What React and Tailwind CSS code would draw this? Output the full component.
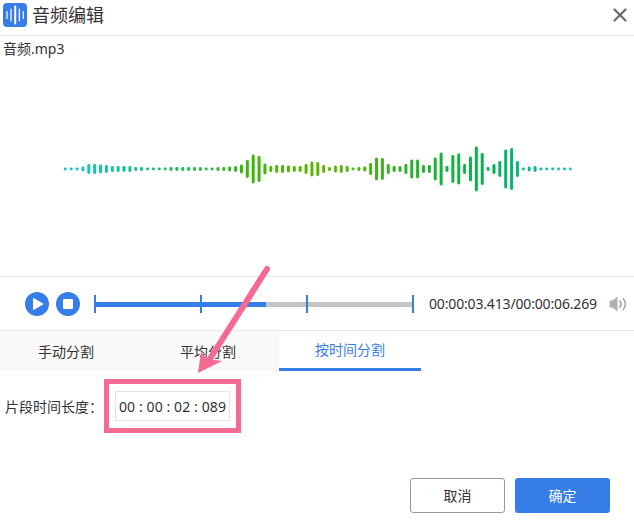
import React from "react";
import { X } from "lucide-react";

const FONT = "font-['Noto_Sans','Noto_Sans_CJK_SC',sans-serif]";

// bar heights of the waveform, left to right
const BARS = [
  3, 3, 3, 5, 10, 10, 9, 8, 6, 6, 6, 6, 4, 4, 3, 3, 3, 3, 4, 4, 4, 4, 4, 4, 3, 3, 4, 4, 5, 6, 9,
  18, 29, 26, 11, 6, 8, 8, 7, 6, 6, 10, 15, 14, 8, 4, 7, 8, 6, 3, 4, 5, 12, 23, 22, 10, 6, 6, 10,
  19, 19, 8, 8, 23, 33, 6, 28, 31, 10, 25, 45, 32, 4, 10, 16, 39, 42, 16, 3, 5, 6, 3, 3, 3, 3, 3, 3,
];

const Waveform = () => {
  const pitch = 505 / (BARS.length - 1);
  return (
    <svg width="634" height="60" viewBox="0 0 634 60" className="block">
      <defs>
        <linearGradient id="wave" gradientUnits="userSpaceOnUse" x1="65" y1="0" x2="570" y2="0">
          <stop offset="0" stopColor="#1cc4cf" />
          <stop offset="0.12" stopColor="#0ec096" />
          <stop offset="0.36" stopColor="#36b80a" />
          <stop offset="0.52" stopColor="#66b504" />
          <stop offset="0.68" stopColor="#26b326" />
          <stop offset="0.85" stopColor="#03b158" />
          <stop offset="1" stopColor="#1cc4cf" />
        </linearGradient>
      </defs>
      {BARS.map((h, i) => (
        <rect
          key={i}
          x={63.8 + i * pitch}
          y={30 - h / 2}
          width="3"
          height={h}
          rx="1.4"
          fill="url(#wave)"
        />
      ))}
    </svg>
  );
};

const AppIcon = () => (
  <svg width="24" height="24" viewBox="0 0 24 24" className="shrink-0">
    <rect width="24" height="24" rx="4" fill="#377de8" />
    <g stroke="#fff" strokeWidth="1.2" strokeLinecap="round">
      <path d="M4 8.500v7" />
      <path d="M8 6v12" />
      <path d="M12.200 3.500v17" strokeWidth="2" />
      <path d="M16.300 6v12" />
      <path d="M20.300 8.500v7" />
    </g>
  </svg>
);

const PlayIcon = () => (
  <svg width="24" height="24" viewBox="0 0 24 24">
    <circle cx="12" cy="12" r="12" fill="#377de8" />
    <path d="M8.500 6.500 18 12l-9.500 5.500z" fill="#fff" stroke="#fff" strokeWidth="1" strokeLinejoin="round" />
  </svg>
);

const StopIcon = () => (
  <svg width="24" height="24" viewBox="0 0 24 24">
    <circle cx="12" cy="12" r="12" fill="#377de8" />
    <rect x="7" y="7" width="10" height="10" rx="1" fill="#fff" />
  </svg>
);

const SpeakerIcon = () => (
  <svg width="18" height="18" viewBox="0 0 18 18">
    <path d="M0.500 5.500h3l5-4v15l-5-4h-3z" fill="#b0b0b0" />
    <path d="M10.800 6a4.500 4.500 0 0 1 0 6" fill="none" stroke="#b0b0b0" strokeWidth="1.8" strokeLinecap="round" />
    <path d="M14.200 3.500a8 8 0 0 1 0 11" fill="none" stroke="#b0b0b0" strokeWidth="1.8" strokeLinecap="round" />
  </svg>
);

const Arrow = () => (
  <svg
    width="90"
    height="120"
    viewBox="0 0 90 120"
    className="absolute left-[190px] top-[262px] pointer-events-none"
  >
    <path d="M77 7 16 103" fill="none" stroke="#f56a93" strokeWidth="6" strokeLinecap="round" />
    <path d="M8 111 11 90 17 97 32 99z" fill="#f56a93" />
  </svg>
);

const App = () => {
  return (
    <div className={`${FONT} relative flex h-[530px] w-[634px] flex-col overflow-hidden bg-white text-[#333]`}>
      {/* Title bar */}
      <div className="flex h-[36px] shrink-0 items-center border-b border-[#e8e8e8] pb-[6px] pl-[3px] pr-[3px]">
        <AppIcon />
        <span className="ml-[5px] text-[18px] leading-none">音频编辑</span>
        <X size={22} strokeWidth={2.6} className="ml-auto text-[#6d6d7a]" />
      </div>

      {/* Wave area */}
      <div className="flex h-[240px] shrink-0 flex-col">
        <div className="pl-[3px] pt-[3px] text-[14px] leading-[19px]">音频.mp3</div>
        <div className="mt-[81px]">
          <Waveform />
        </div>
      </div>

      {/* Player controls */}
      <div className="flex h-[55px] shrink-0 items-center border-y border-[#e8e8e8] pl-[25px]">
        <PlayIcon />
        <div className="ml-[7px]">
          <StopIcon />
        </div>
        <div className="relative ml-[14px] flex h-[18px] w-[320px] justify-between">
          <div className="absolute left-0 right-0 top-[7px] h-[5px] bg-[#c4c4c4]" />
          <div className="absolute left-0 top-[7px] h-[5px] w-[172px] bg-[#377de8]" />
          {[0, 1, 2, 3].map((i) => (
            <div key={i} className="relative h-full w-[2px] bg-[#377de8]" />
          ))}
        </div>
        <span className="ml-[15px] text-[14px] leading-none tracking-[-0.16px]">00:00:03.413/00:00:06.269</span>
        <div className="ml-[12px]">
          <SpeakerIcon />
        </div>
      </div>

      {/* Tabs */}
      <div className="flex h-[40px] shrink-0 text-[14px]">
        <div className="flex w-[137px] items-center justify-center bg-[#f9f9f9] pr-[5px]">手动分割</div>
        <div className="flex w-[142px] items-center justify-center bg-[#f9f9f9]">平均分割</div>
        <div className="flex w-[142px] items-center justify-center border-b-[3px] border-[#377de8] text-[#377de8]">
          按时间分割
        </div>
      </div>

      {/* Segment length */}
      <div className="mt-[8px] flex items-center pl-[5px]">
        <span className="text-[14px]">片段时间长度：</span>
        <div className="ml-[1px] border-[5px] border-[#f56a93] px-[6px] py-[7px]">
          <div className="flex h-[30px] w-[115px] items-center justify-center border border-[#e4e4e4] text-[14px] tracking-[0.1px] whitespace-pre">
            00 : 00 : 02 : 089
          </div>
        </div>
      </div>

      {/* Footer */}
      <div className="mt-auto flex justify-end gap-[10px] pb-[17px] pr-[24px] text-[14px]">
        <button className="h-[35px] w-[95px] rounded-[3px] border border-[#999] pb-[1px]">取消</button>
        <button className="h-[35px] w-[95px] rounded-[3px] bg-[#377de8] pb-[1px] text-white">确定</button>
      </div>

      <Arrow />
    </div>
  );
};

export default App;
